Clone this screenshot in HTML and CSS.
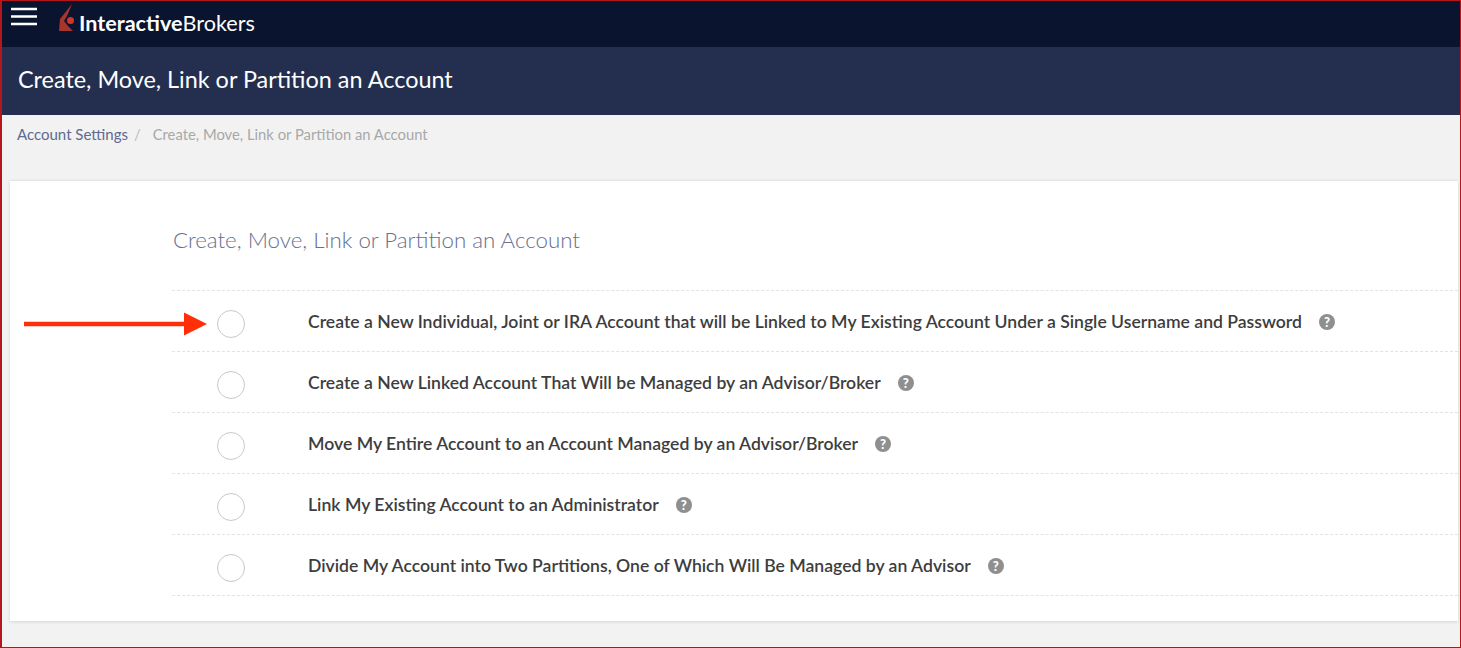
FILE: index.html
```html
<!DOCTYPE html>
<html lang="en">
<head>
<meta charset="utf-8">
<title>Create, Move, Link or Partition an Account</title>
<link rel="stylesheet" href="styles.css">
</head>
<body>
<div class="frame">
  <header class="topbar">
    <svg class="burger" width="26" height="20" viewBox="0 0 26 20"><path d="M0 2h26M0 9.500h26M0 17h26" stroke="#fff" stroke-width="2.400"/></svg>
    <svg class="logo-mark" width="17" height="29" viewBox="0 0 17 29"><path d="M0 28 L1 16 L13 1 L8 13 L5 18 L9 23 L14 28 Z" fill="#a8352c"/><circle cx="11.500" cy="17.500" r="3.500" fill="#d0352b"/></svg>
    <div class="brand"><b>Interactive</b>Brokers</div>
  </header>
  <div class="titlebar"><h1>Create, Move, Link or Partition an Account</h1></div>
  <nav class="crumbs"><a>Account Settings</a><span class="sep">/</span><span class="cur">Create, Move, Link or Partition an Account</span></nav>
  <main class="card">
    <h2>Create, Move, Link or Partition an Account</h2>
    <ul class="options">
      <li><span class="radio"></span><span class="label">Create a New Individual, Joint or IRA Account that will be Linked to My Existing Account Under a Single Username and Password</span><span class="help">?</span></li>
      <li><span class="radio"></span><span class="label">Create a New Linked Account That Will be Managed by an Advisor/Broker</span><span class="help">?</span></li>
      <li><span class="radio"></span><span class="label">Move My Entire Account to an Account Managed by an Advisor/Broker</span><span class="help">?</span></li>
      <li><span class="radio"></span><span class="label">Link My Existing Account to an Administrator</span><span class="help">?</span></li>
      <li><span class="radio"></span><span class="label">Divide My Account into Two Partitions, One of Which Will Be Managed by an Advisor</span><span class="help">?</span></li>
    </ul>
    <svg class="arrow" width="185" height="26" viewBox="0 0 185 26"><path d="M0 10.800h160V1.500L183 13 160 24.500V15.200H0z" fill="#ff2f0a"/></svg>
  </main>
</div>
</body>
</html>
```
FILE: styles.css
```css
* { box-sizing: border-box; }
html, body { margin: 0; padding: 0; }
body { font-family: Lato, "Liberation Sans", sans-serif; background: #fff; }
.frame {
  width: 1461px; height: 648px; overflow: hidden;
  border: 1px solid #b5161c; border-left-width: 2px;
  background: #f2f2f2; position: relative;
}
.topbar {
  height: 46px; background: #0a142f;
  display: flex; align-items: flex-start; position: relative;
}
.burger { margin: 6px 0 0 9px; }
.logo-mark { margin: 2px 0 0 22px; }
.brand { margin: 9px 0 0 3px; color: #fff; font-size: 21.600px; line-height: 26px; }
.brand b { font-weight: 700; }
.titlebar { height: 68px; background: #242f4f; padding: 17px 0 0 16px; }
.titlebar h1 { margin: 0; color: #fff; font-size: 23.400px; line-height: 30px; font-weight: 400; }
.crumbs { height: 65px; padding: 11px 0 0 15px; font-size: 14.800px; line-height: 17px; display: flex; }
.crumbs a { color: #5d6a91; font-size: 15px; }
.sep { color: #bbb; margin: 0 12px 0 6px; }
.cur { color: #a8a8a8; }
.card {
  margin-left: 8px; height: 441px; background: #fff; position: relative;
  border-top: 1px solid #e4e4e4;
  box-shadow: 0 1px 3px rgba(0,0,0,.12);
  padding: 46px 0 0 162px; margin-right: 2px;
}
.card h2 { margin: 0; height: 63px; padding-left: 1px; color: #65708f; font-size: 22.300px; line-height: 26px; font-weight: 300; }
.options { list-style: none; margin: 0; padding: 0; border-top: 1px dashed #e3e3e3; }
.options li { height: 61px; display: flex; align-items: center; border-bottom: 1px dashed #e3e3e3; padding-left: 45px; }
.radio { width: 28px; height: 28px; border: 1px solid #c9c9c9; border-radius: 50%; flex: none; margin: 6px 63px 0 0; background: #fff; }
.label { color: #3d3d3d; font-size: 17.600px; line-height: 22px; font-weight: 600; margin-top: 1px; }
.help {
  width: 16px; height: 16px; border-radius: 50%; background: #8f8f8f; color: #fff; flex: none;
  font-size: 13px; line-height: 16px; font-weight: 900; text-align: center;
  margin: 1px 0 0 17px;
}
.arrow { position: absolute; left: 14px; top: 130px; }
```
